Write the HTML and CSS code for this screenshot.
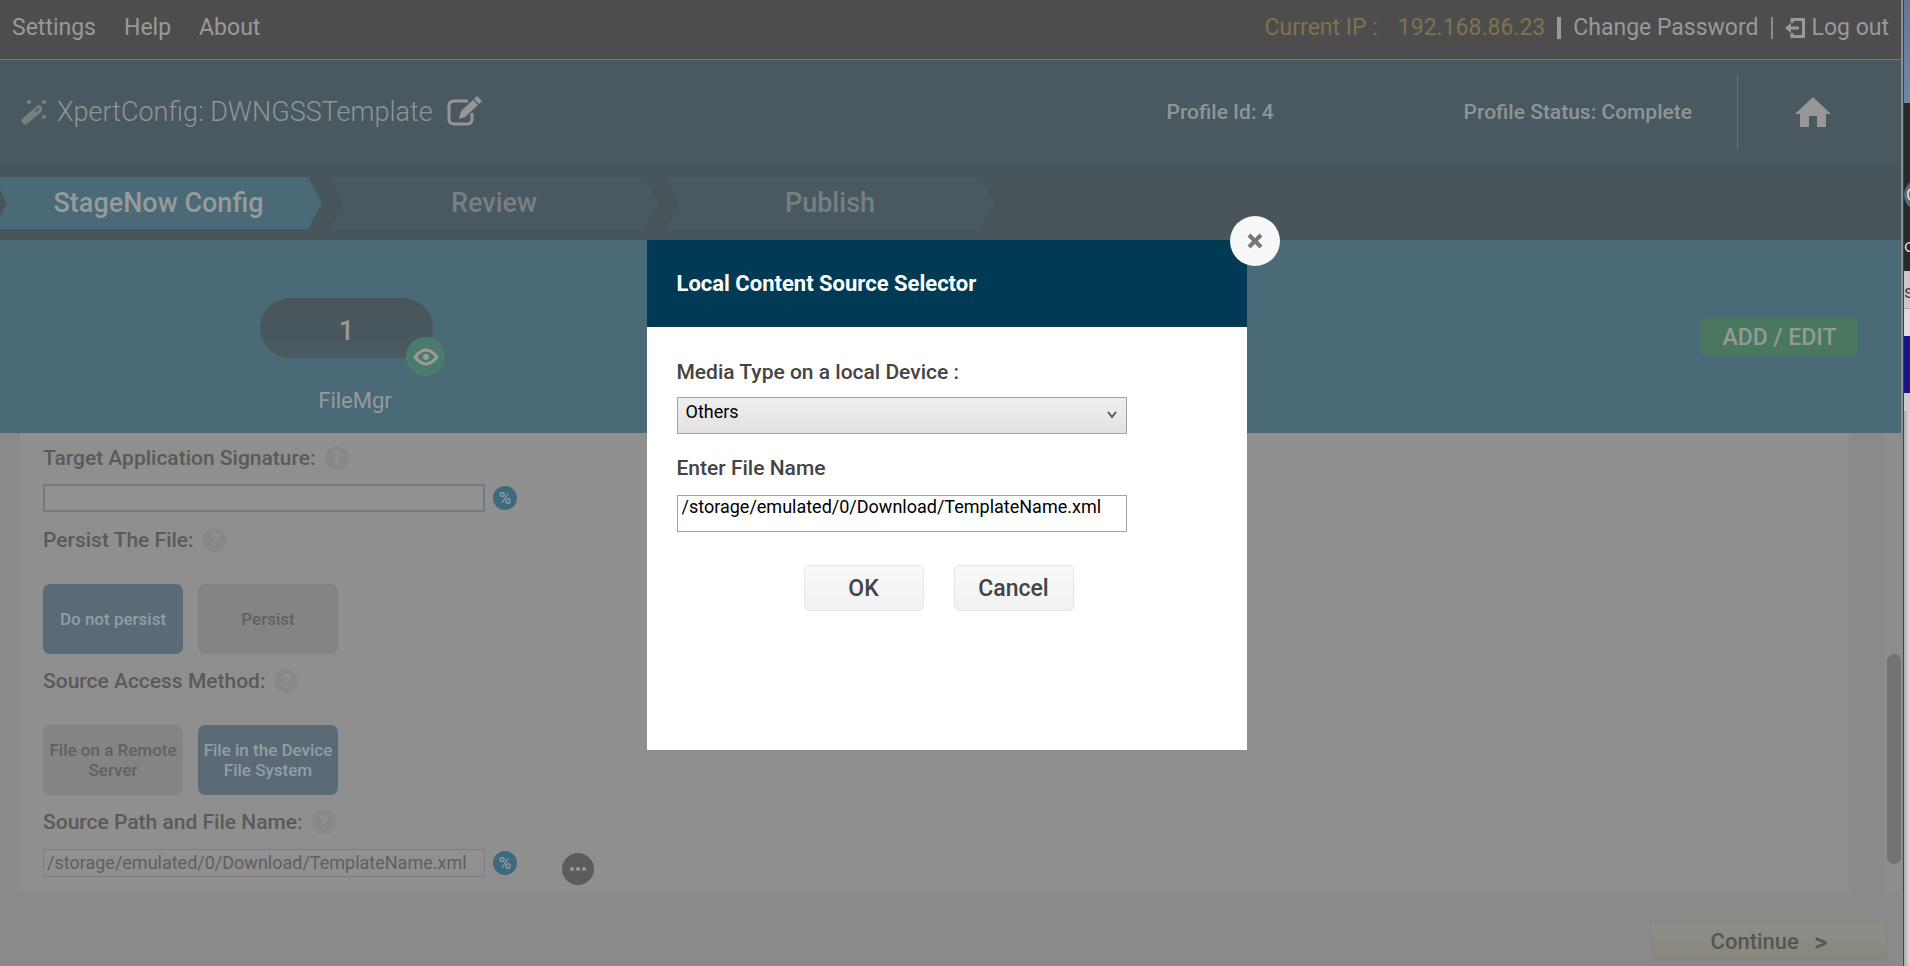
FILE: index.html
```html
<!DOCTYPE html>
<html lang="en">
<head>
<meta charset="utf-8">
<title>StageNow - XpertConfig</title>
<link rel="stylesheet" href="styles.css">
</head>
<body>
<div class="desktop">
<div class="app">
  <nav class="topbar">
    <div class="menu"><a href="#">Settings</a><a href="#">Help</a><a href="#">About</a></div>
    <div class="session">
      <span class="ip">Current IP :</span><span class="ip ip-value">192.168.86.23</span>
      <span class="bar thick"></span><a href="#">Change Password</a><span class="bar"></span>
      <a href="#" class="logout"><svg width="20" height="22" viewBox="0 0 20 22"><path d="M7 6V2.500H18.500V19.500H7V16" fill="none" stroke="currentColor" stroke-width="3"/><path d="M0 11L6 6V9.500H14V12.500H6V16Z" fill="currentColor"/></svg>Log out</a>
    </div>
  </nav>
  <header class="profile">
    <svg class="wand" width="28" height="28" viewBox="0 0 28 28" fill="currentColor"><path d="M2 21L17 8Q19 6 21 8L22 10Q23 12 21 14L7 26Q5 27 4 26L2 24Q1 22 2 21Z"/><path d="M14 13L18 9L20 11L16 15Z" fill="#5b686d"/><circle cx="9" cy="4" r="2"/><circle cx="24" cy="4" r="2"/><circle cx="24" cy="19" r="2"/></svg>
    <h1>XpertConfig: DWNGSSTemplate</h1>
    <button class="icon-button" aria-label="Edit name"><svg width="36" height="32" viewBox="0 0 36 32"><path d="M21 5H7Q2 5 2 10V23Q2 28 7 28H20Q25 28 25 23V17" fill="none" stroke="currentColor" stroke-width="3"/><path d="M12 23L14 15L26 4L31 9L18 21ZM27 3L30 0L35 5L32 8Z" fill="currentColor"/></svg></button>
    <span class="profile-id">Profile Id: 4</span>
    <span class="profile-status">Profile Status: Complete</span>
    <a class="home" href="#" aria-label="Home"><svg width="36" height="32" viewBox="0 0 36 32"><path d="M18 1L36 18H31V31H22V20H14V31H5V18H0Z" fill="currentColor"/></svg></a>
  </header>
  <ol class="steps">
    <li class="step active">StageNow Config</li>
    <li class="step">Review</li>
    <li class="step">Publish</li>
  </ol>
  <section class="settings-band">
    <div class="setting">
      <div class="pill">1<span class="eye"><svg width="26" height="18" viewBox="0 0 26 18"><path d="M2 9Q13 -5 24 9Q13 23 2 9Z" fill="none" stroke="currentColor" stroke-width="3"/><circle cx="13" cy="9" r="3" fill="currentColor"/></svg></span></div>
      <span class="setting-name">FileMgr</span>
    </div>
    <button class="add">ADD / EDIT</button>
  </section>
  <main class="content">
    <form class="panel">
      <div class="label-row"><label for="sig">Target Application Signature:</label><span class="help">?</span></div>
      <div class="input-row"><input id="sig" type="text"><span class="percent">%</span></div>
      <div class="label-row"><span>Persist The File:</span><span class="help">?</span></div>
      <div class="choices"><button type="button" class="choice on">Do not persist</button><button type="button" class="choice">Persist</button></div>
      <div class="label-row"><span>Source Access Method:</span><span class="help">?</span></div>
      <div class="choices"><button type="button" class="choice">File on a Remote Server</button><button type="button" class="choice on">File in the Device File System</button></div>
      <div class="label-row"><label for="path">Source Path and File Name:</label><span class="help">?</span></div>
      <div class="input-row"><input id="path" class="faint" type="text" value="/storage/emulated/0/Download/TemplateName.xml"><span class="percent">%</span><button type="button" class="more" aria-label="Browse"><i></i><i></i><i></i></button></div>
    </form>
    <div class="scroll"><div class="thumb"></div></div>
  </main>
  <footer class="footer"><button class="continue">Continue<span>&gt;</span></button></footer>
  <div class="overlay">
    <div class="dialog" role="dialog" aria-labelledby="dialog-title">
      <h2 id="dialog-title">Local Content Source Selector</h2>
      <button class="close" aria-label="Close"><svg width="16" height="16" viewBox="0 0 16 16"><path d="M2 2L14 14M14 2L2 14" stroke="#777" stroke-width="4"/></svg></button>
      <div class="dialog-body">
        <label for="media">Media Type on a local Device :</label>
        <div class="select-wrap"><select id="media"><option>Others</option></select><svg width="10" height="10" viewBox="0 0 10 10"><path d="M1 2L5 7L9 2" fill="none" stroke="#555" stroke-width="2"/></svg></div>
        <label for="file">Enter File Name</label>
        <input id="file" type="text" value="/storage/emulated/0/Download/TemplateName.xml">
        <div class="actions"><button>OK</button><button>Cancel</button></div>
      </div>
    </div>
  </div>
</div>
<aside class="behind"><div class="b-sky"></div><div class="b-dark"><span class="b-badge">C</span><span class="b-letter">o</span></div><div class="b-light">s</div><div class="b-line"></div><div class="b-blue"></div><div class="b-page"></div></aside>
</div>
</body>
</html>
```

FILE: styles.css
```css
* { box-sizing: border-box; }
body { margin: 0; font-family: Roboto, sans-serif; background: #8a8a8a; overflow: hidden; }
button, input, select { font-family: inherit; }
button { cursor: pointer; padding: 0; border: 0; }
a { color: inherit; text-decoration: none; }
svg { display: block; flex: none; }
.desktop { display: flex; height: 100vh; }
.app { flex: 1; min-width: 0; display: flex; flex-direction: column; position: relative; border-right: 2px solid #8d8d8d; }

.topbar { height: 60px; flex: none; display: flex; justify-content: space-between; padding: 0 12px 4px 12px; background: #4d4d4d; border-bottom: 1px solid #777; color: #999; font-size: 23px; align-items: center; }
.menu { display: flex; gap: 28px; }
.session { display: flex; align-items: center; }
.ip { color: #7e724f; }
.ip-value { margin-left: 20px; }
.bar { width: 2px; height: 22px; margin: 0 12px; background: #8b8b8b; }
.bar.thick { width: 4px; background: #999; }
.logout { display: flex; align-items: center; gap: 7px; }

.profile { height: 104px; flex: none; display: flex; align-items: center; padding-left: 20px; background: #49595f; color: #8f9497; }
.wand { margin-right: 9px; color: #7c7f80; }
.profile h1 { margin: 0 14px 0 0; font-size: 27px; font-weight: 300; }
.icon-button { background: none; color: #969696; }
.profile-id { margin-left: auto; }
.profile-id, .profile-status { font-size: 21px; font-weight: 500; }
.profile-status { margin-left: 190px; }
.home { margin-left: 45px; height: 76px; width: 164px; padding-left: 57px; display: flex; align-items: center; border-left: 1px solid #66757b; color: #979797; }

.steps { height: 76px; flex: none; display: flex; gap: 8px; margin: 0; padding: 13px 0 11px; list-style: none; background: linear-gradient(#49595f, #48555a 8px); }
.step { width: 328px; display: flex; align-items: center; justify-content: center; font-size: 27px; font-weight: 500; color: #777f83; background: #49595f; clip-path: polygon(0 0, 314px 0, 100% 50%, 314px 100%, 0 100%, 14px 50%); }
.step.active { width: 322px; color: #979a9b; background: #4b6a78; clip-path: polygon(0 0, 308px 0, 100% 50%, 308px 100%, 0 100%, 0 75%, 7px 50%, 0 25%); padding-right: 5px; }

.settings-band { height: 193px; flex: none; display: flex; align-items: flex-start; justify-content: space-between; padding: 58px 43px 0 260px; background: #4b6a78; color: #999; }
.setting { display: flex; flex-direction: column; gap: 29px; }
.pill { position: relative; width: 173px; height: 60px; border-radius: 30px; background: linear-gradient(#49555a, #495a60); display: flex; align-items: center; justify-content: center; font-size: 27px; font-weight: 500; padding-top: 6px; }
.eye { position: absolute; right: -12px; bottom: -18px; width: 39px; height: 39px; border-radius: 50%; background: #4b7b6c; display: flex; align-items: center; justify-content: center; }
.setting-name { font-size: 22px; text-align: center; line-height: 28px; margin-left: 17px; }
.add { width: 157px; height: 38px; margin-top: 20px; border-radius: 6px; background: #4a785f; color: #929a96; font-size: 23px; font-weight: 500; }

.content { flex: 1; min-height: 0; display: flex; justify-content: space-between; background: #8a8a8a; }
.panel { flex: 1; margin: 0 36px 0 20px; padding: 12px 23px 0; background: #8f8f8f; color: #5a5a5a; display: flex; flex-direction: column; align-items: flex-start; }
.label-row { display: flex; align-items: center; gap: 9px; height: 28px; font-size: 21px; font-weight: 500; }
.help { width: 24px; height: 24px; border-radius: 50%; background: #888; color: #929292; font-size: 18px; line-height: 24px; text-align: center; }
.input-row { display: flex; align-items: center; margin: 14px 0 15px; height: 28px; }
.input-row input { width: 442px; height: 28px; border: 2px solid #747b80; background: #909090; padding: 0 3px 2px; font-size: 18px; color: #5f5f5f; }
.input-row .faint { border: 1px solid #7c7c7c; }
.percent { width: 24px; height: 24px; margin-left: 8px; border-radius: 50%; background: #3f6a7e; color: #8f9ba1; font-size: 17px; font-weight: 500; line-height: 24px; text-align: center; }
.choices { display: flex; gap: 15px; margin: 31px 0 15px; }
.choice { width: 140px; height: 70px; border-radius: 7px; background: #848484; color: #616161; font-size: 17px; line-height: 20px; font-weight: 500; }
.choice.on { background: #5a6b77; color: #969da1; }
.more { width: 32px; height: 32px; margin: 12px 0 0 45px; border-radius: 50%; background: #5c5c5c; display: flex; gap: 2px; align-items: center; justify-content: center; flex: none; }
.more i { width: 4px; height: 4px; border-radius: 50%; background: #999; }
.scroll { width: 16px; background: #8d8d8d; display: flex; flex-direction: column; justify-content: flex-end; padding: 0 0 28px 2px; }
.thumb { height: 210px; border-radius: 7px; background: #737373; }
.footer { height: 74px; flex: none; display: flex; justify-content: flex-end; padding: 30px 14px 0 0; background: #8a8a8a; }
.continue { width: 236px; height: 39px; border: 1px solid #858585; background: linear-gradient(#8d8d8a, #89877c); color: #555; font-size: 22px; font-weight: 500; display: flex; align-items: center; justify-content: center; }
.continue span { margin-left: 15px; font-size: 26px; line-height: 26px; }

.overlay { position: absolute; inset: 0; display: flex; justify-content: center; align-items: flex-start; padding: 240px 8px 0 0; }
.dialog { position: relative; width: 600px; min-height: 510px; background: #fff; color: #444; }
.dialog h2 { margin: 0; padding: 0 30px; height: 87px; line-height: 87px; background: #003a54; color: #fff; font-size: 22px; font-weight: 700; }
.close { position: absolute; right: -33px; top: -24px; width: 50px; height: 50px; border-radius: 50%; background: #f7f7f7; display: flex; align-items: center; justify-content: center; }
.dialog-body { padding: 32px 30px; display: flex; flex-direction: column; align-items: flex-start; }
.dialog-body label { font-size: 21px; line-height: 26px; font-weight: 500; }
.select-wrap { position: relative; margin: 12px 0 21px; }
.select-wrap svg { position: absolute; right: 10px; top: 13px; pointer-events: none; }
.dialog select, .dialog input { display: block; width: 450px; height: 37px; border: 1px solid #a3a3a3; border-radius: 0; font-size: 18px; color: #000; padding: 0 8px 8px; }
.dialog select { appearance: none; background: linear-gradient(#efefef, #e1e1e1); }
.dialog input { margin-top: 14px; padding: 0 4px 14px; background: #fff; }
.actions { display: flex; gap: 30px; margin: 33px 0 0 127px; }
.actions button { width: 120px; height: 46px; border: 1px solid #e6e6e6; border-radius: 5px; background: linear-gradient(#f9f9f9, #f1f1f1); font-size: 23px; font-weight: 500; color: #444; }

.behind { width: 7px; flex: none; overflow: hidden; background: #ddd; border-left: 1px solid #444; display: flex; flex-direction: column; }
.b-sky { height: 103px; background: linear-gradient(#647896, #6e87a6); }
.b-dark { display: flow-root; height: 168px; background: #25282c; }
.b-badge { display: block; margin-top: 76px; width: 32px; height: 32px; padding-left: 2px; border-radius: 16px; background: #4e6c7a; color: #ddd; font-size: 18px; line-height: 32px; }
.b-letter { display: block; margin-top: 24px; color: #d8cfae; font-size: 18px; }
.b-light { height: 37px; font-size: 18px; line-height: 42px; color: #444; background: #c9c9c9; }
.b-line { height: 28px; border-top: 1px solid #aaa; }
.b-blue { height: 57px; background: #17178a; }
.b-page { flex: 1; border-top: 18px solid #ccc; background: linear-gradient(90deg, #aaa, #ddd); }
```
